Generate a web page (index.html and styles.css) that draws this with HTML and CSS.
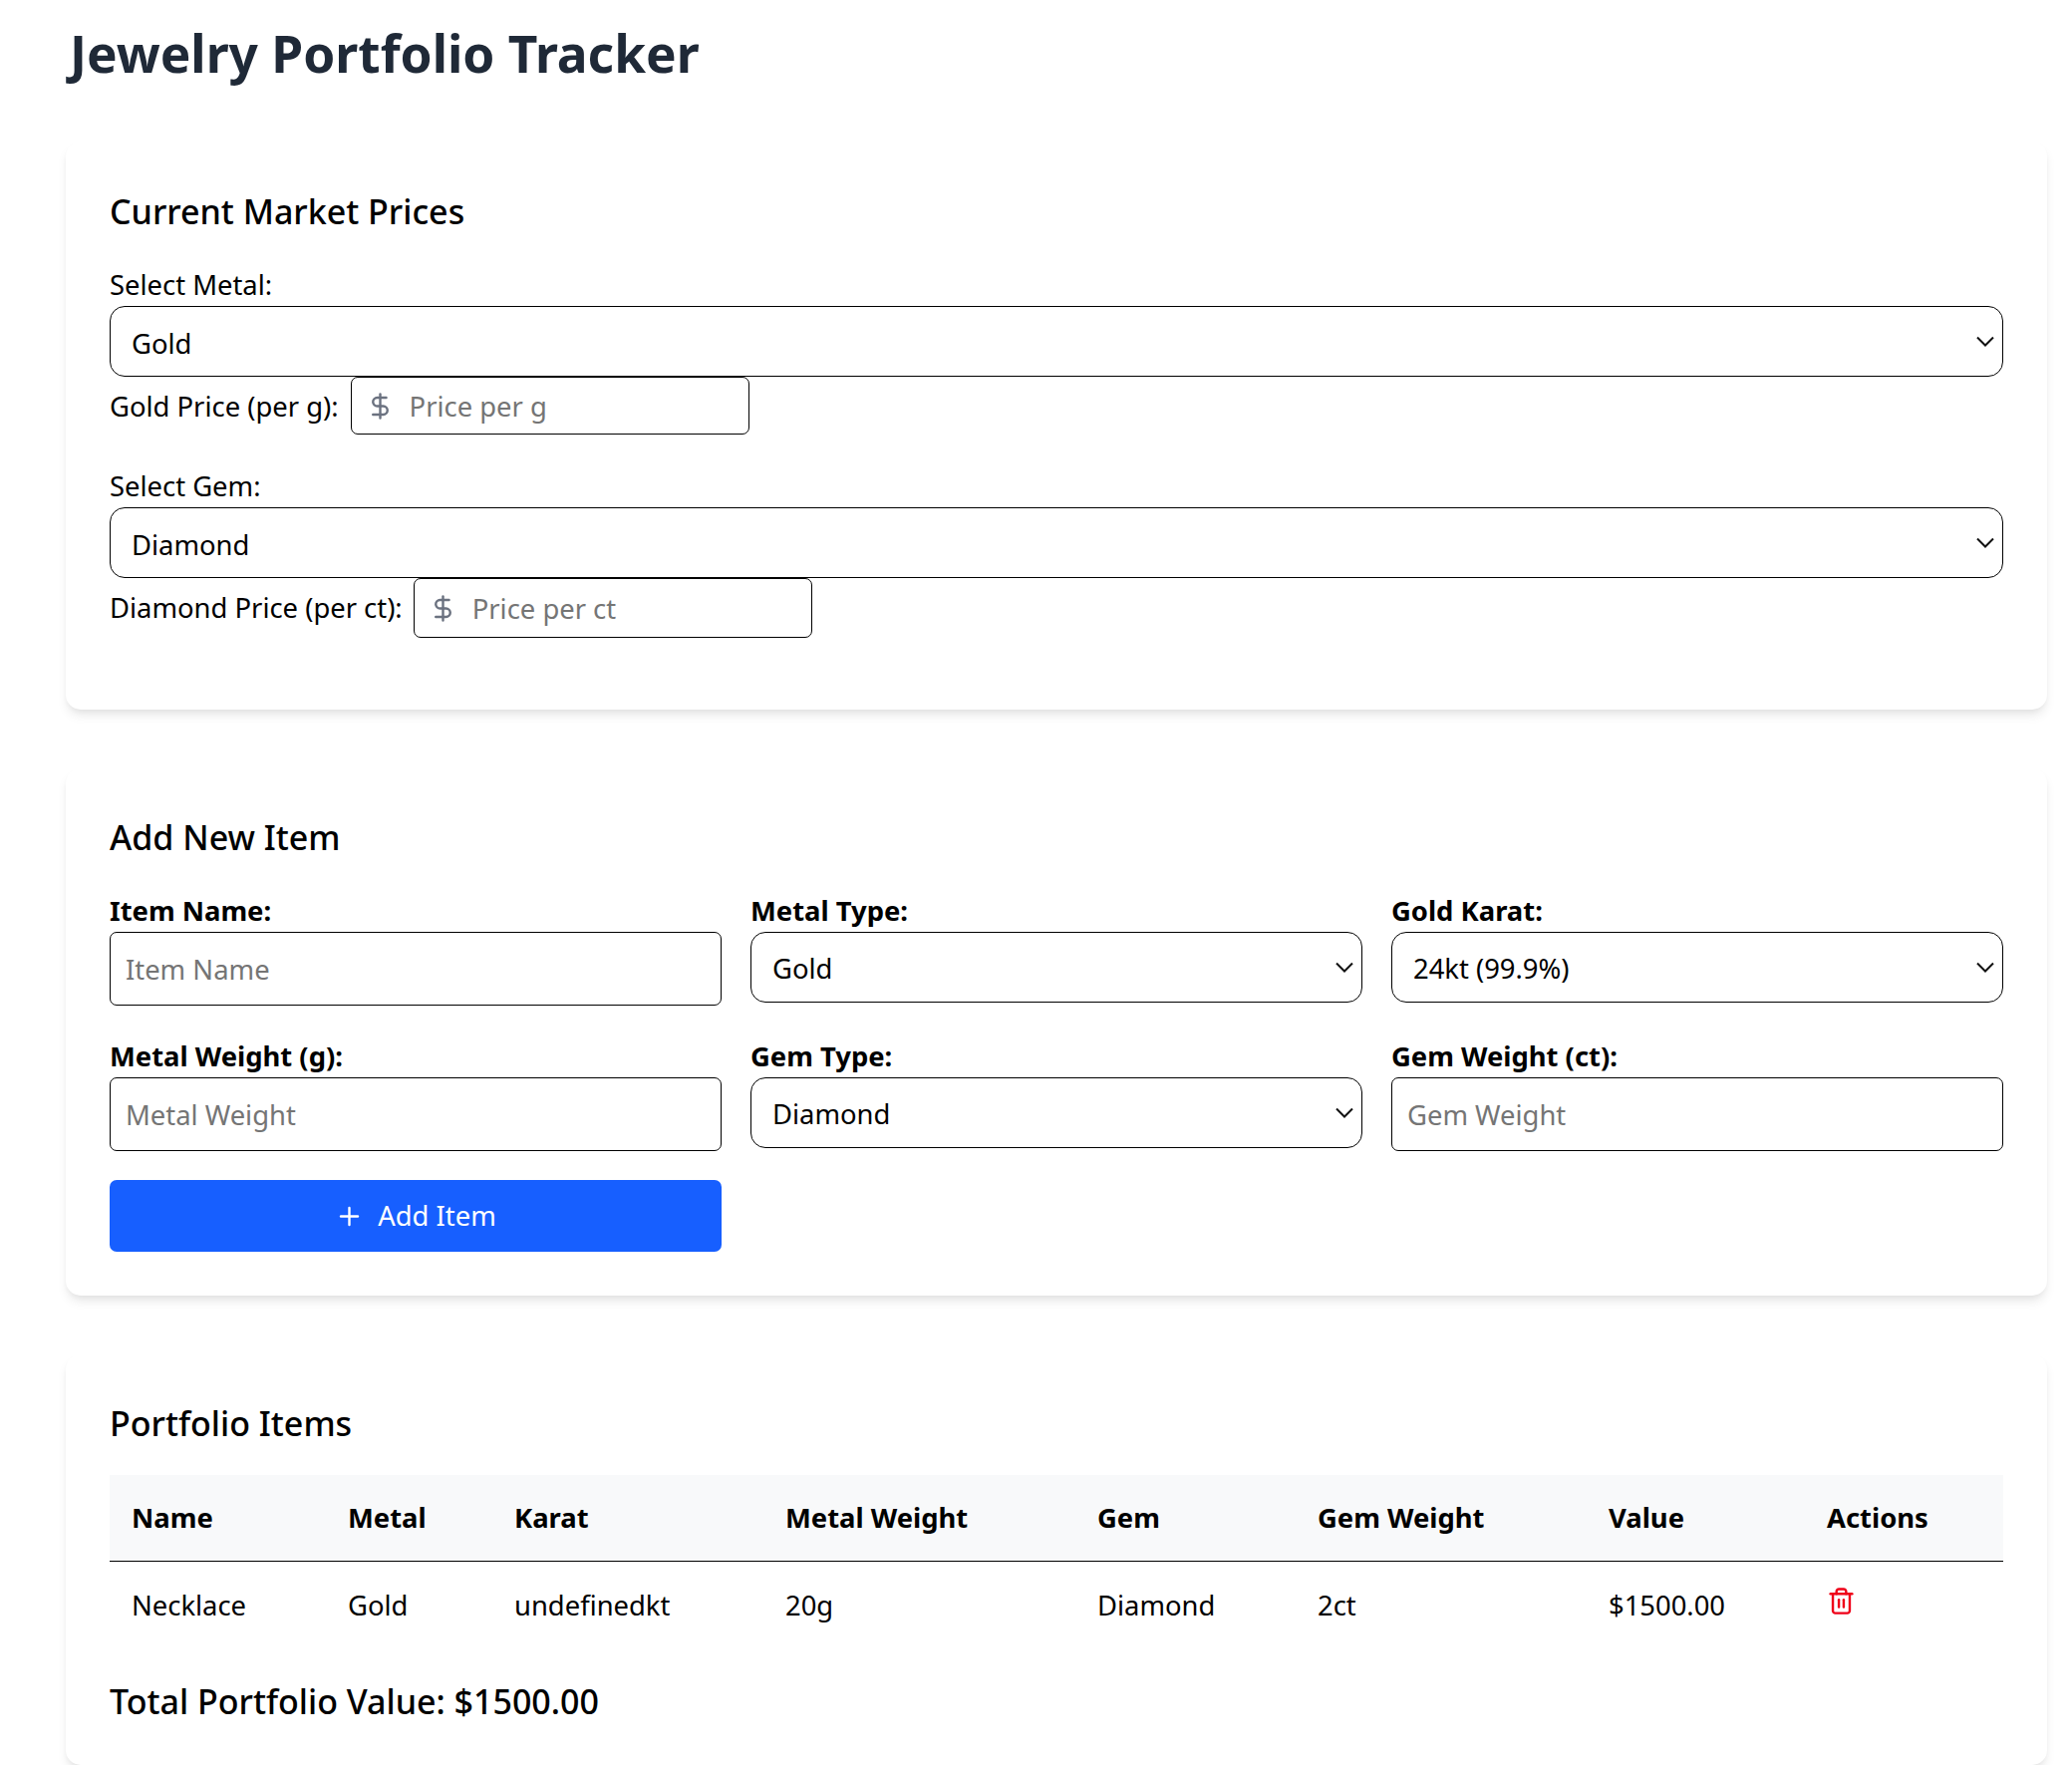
FILE: index.html
```html
<!DOCTYPE html>
<html lang="en">
<head>
  <meta charset="UTF-8">
  <meta name="viewport" content="width=device-width, initial-scale=1.0">
  <title>Jewelry Portfolio Tracker</title>
  <link rel="stylesheet" href="styles.css">
</head>
<body>
  <h1>Jewelry Portfolio Tracker</h1>

  <section class="card card-prices">
    <h2>Current Market Prices</h2>

    <div class="price-block">
      <label class="plain-label" for="metalSelect">Select Metal:</label>
      <select id="metalSelect" class="select">
        <option>Gold</option>
      </select>
      <div class="price-row">
        <label for="metalPrice">Gold Price (per g):</label>
        <div class="price-input">
          <svg class="dollar" viewBox="0 0 24 24"><line x1="12" y1="2" x2="12" y2="22"/><path d="M17 5H9.5a3.5 3.5 0 0 0 0 7h5a3.5 3.5 0 0 1 0 7H6"/></svg>
          <input type="text" id="metalPrice" placeholder="Price per g">
        </div>
      </div>
    </div>

    <div class="price-block">
      <label class="plain-label" for="gemSelect">Select Gem:</label>
      <select id="gemSelect" class="select">
        <option>Diamond</option>
      </select>
      <div class="price-row tall">
        <label for="gemPrice">Diamond Price (per ct):</label>
        <div class="price-input">
          <svg class="dollar" viewBox="0 0 24 24"><line x1="12" y1="2" x2="12" y2="22"/><path d="M17 5H9.5a3.5 3.5 0 0 0 0 7h5a3.5 3.5 0 0 1 0 7H6"/></svg>
          <input type="text" id="gemPrice" placeholder="Price per ct">
        </div>
      </div>
    </div>
  </section>

  <section class="card card-add">
    <h2>Add New Item</h2>
    <div class="form-grid">
      <div class="field">
        <label for="itemName">Item Name:</label>
        <input class="text-input" type="text" id="itemName" placeholder="Item Name">
      </div>
      <div class="field">
        <label for="metalType">Metal Type:</label>
        <select id="metalType" class="select"><option>Gold</option></select>
      </div>
      <div class="field">
        <label for="karat">Gold Karat:</label>
        <select id="karat" class="select"><option>24kt (99.9%)</option></select>
      </div>
      <div class="field">
        <label for="metalWeight">Metal Weight (g):</label>
        <input class="text-input" type="text" id="metalWeight" placeholder="Metal Weight">
      </div>
      <div class="field">
        <label for="gemType">Gem Type:</label>
        <select id="gemType" class="select"><option>Diamond</option></select>
      </div>
      <div class="field">
        <label for="gemWeight">Gem Weight (ct):</label>
        <input class="text-input" type="text" id="gemWeight" placeholder="Gem Weight">
      </div>
      <button class="add-button">
        <svg class="plus" viewBox="0 0 24 24"><path d="M5 12h14"/><path d="M12 5v14"/></svg>
        Add Item
      </button>
    </div>
  </section>

  <section class="card card-items">
    <h2>Portfolio Items</h2>
    <table>
      <colgroup>
        <col class="col-name">
        <col class="col-metal">
        <col class="col-karat">
        <col class="col-weight">
        <col class="col-gem">
        <col class="col-gem-weight">
        <col class="col-value">
        <col class="col-actions">
      </colgroup>
      <thead>
        <tr>
          <th>Name</th>
          <th>Metal</th>
          <th>Karat</th>
          <th>Metal Weight</th>
          <th>Gem</th>
          <th>Gem Weight</th>
          <th>Value</th>
          <th>Actions</th>
        </tr>
      </thead>
      <tbody>
        <tr>
          <td>Necklace</td>
          <td>Gold</td>
          <td>undefinedkt</td>
          <td>20g</td>
          <td>Diamond</td>
          <td>2ct</td>
          <td>$1500.00</td>
          <td>
            <button class="delete-button" aria-label="Delete">
              <svg class="trash" viewBox="0 0 24 24"><path d="M3 6h18"/><path d="M19 6v14c0 1-1 2-2 2H7c-1 0-2-1-2-2V6"/><path d="M8 6V4c0-1 1-2 2-2h4c1 0 2 1 2 2v2"/><line x1="10" y1="11" x2="10" y2="17"/><line x1="14" y1="11" x2="14" y2="17"/></svg>
            </button>
          </td>
        </tr>
      </tbody>
    </table>
    <h3>Total Portfolio Value: $1500.00</h3>
  </section>
</body>
</html>
```

FILE: styles.css
```css
* {
  box-sizing: border-box;
}

body {
  margin: 0;
  padding: 0 25px 0 66px;
  background-color: #fff;
  color: #000;
  font-family: "Noto Sans", "Open Sans", sans-serif;
  font-size: 27.4px;
  line-height: 44px;
}

h1 {
  margin: 0;
  padding: 21px 0 0 4px;
  height: 142px;
  color: #1f2937;
  font-size: 51.4px;
  font-weight: 700;
  line-height: 64px;
}

h2 {
  margin: 0 0 26px;
  font-size: 34px;
  font-weight: 500;
  line-height: 51px;
}

h3 {
  margin: 29px 0 0;
  font-size: 34px;
  font-weight: 500;
  line-height: 51px;
}

.card {
  padding: 44px;
  margin-bottom: 59px;
  background-color: #fff;
  border-radius: 15px;
  box-shadow: 0 7px 11px -2px rgba(0, 0, 0, 0.1), 0 3px 7px -3px rgba(0, 0, 0, 0.06);
}

.card-prices {
  height: 570px;
}

.card-prices h2 {
  padding-top: 1px;
  margin-bottom: 25px;
}

.card-add {
  height: 529px;
}

.card-items {
  height: 412px;
  margin-bottom: 0;
}

.plain-label {
  display: block;
  padding-top: 1px;
  line-height: 43px;
}

.select {
  display: block;
  width: 100%;
  height: 71px;
  padding: 4px 44px 0 21px;
  appearance: none;
  background-color: #fff;
  background-image: url("data:image/svg+xml,%3Csvg xmlns='http://www.w3.org/2000/svg' viewBox='0 0 18 11'%3E%3Cpath d='M1 1.5l8 8 8-8' fill='none' stroke='%23111' stroke-width='2'/%3E%3C/svg%3E");
  background-repeat: no-repeat;
  background-position: right 8px center;
  background-size: 18px 11px;
  border: 1px solid #000;
  border-radius: 15px;
  color: #000;
  font: inherit;
}

.form-grid .select {
  padding-top: 3px;
}

.price-block {
  margin-bottom: 29px;
}

.price-row {
  display: flex;
  align-items: flex-start;
  gap: 12px;
  line-height: 57px;
}

.price-row label {
  padding-top: 1px;
}

.price-row.tall {
  gap: 11px;
}

.price-input {
  position: relative;
  width: 400px;
  height: 58px;
}

.price-row.tall .price-input {
  height: 60px;
}

.price-input input {
  width: 100%;
  height: 100%;
  padding: 0 14px 0 58px;
  border: 1px solid #000;
  border-radius: 7px;
  font: inherit;
}

.dollar {
  position: absolute;
  left: 15px;
  top: 15px;
  width: 29px;
  height: 29px;
  fill: none;
  stroke: #6b7280;
  stroke-width: 2;
  stroke-linecap: round;
  stroke-linejoin: round;
}

.price-row.tall .dollar {
  top: 16px;
}

input::placeholder {
  color: #757575;
  opacity: 1;
}

.form-grid {
  display: grid;
  grid-template-columns: repeat(3, 1fr);
  gap: 28px 29px;
}

.card-add h2 {
  margin-bottom: 25px;
}

.field label {
  display: block;
  padding-top: 1px;
  font-weight: 700;
  line-height: 43px;
}

.text-input {
  display: block;
  width: 100%;
  height: 74px;
  padding: 0 15px;
  border: 1px solid #000;
  border-radius: 7px;
  font: inherit;
}

.add-button {
  display: flex;
  align-items: center;
  justify-content: center;
  gap: 14px;
  height: 72px;
  margin-top: 1px;
  background-color: #175fff;
  border: none;
  border-radius: 7px;
  color: #fff;
  cursor: pointer;
  font: inherit;
}

.plus {
  width: 29px;
  height: 29px;
  fill: none;
  stroke: #fff;
  stroke-width: 2;
  stroke-linecap: round;
}

table {
  width: 100%;
  border-collapse: collapse;
  table-layout: fixed;
}

.col-name { width: 217px; }
.col-metal { width: 167px; }
.col-karat { width: 272px; }
.col-weight { width: 313px; }
.col-gem { width: 221px; }
.col-gem-weight { width: 292px; }
.col-value { width: 219px; }
.col-actions { width: 199px; }

th, td {
  padding: 21px 22px;
  text-align: left;
  white-space: nowrap;
}

td {
  padding: 22px 22px 20px;
  vertical-align: top;
}

th {
  background-color: #f8f9fa;
  border-bottom: 1px solid #000;
  font-weight: 700;
}

.delete-button {
  display: block;
  padding: 0;
  background: none;
  border: none;
  cursor: pointer;
}

.trash {
  display: block;
  width: 29px;
  height: 29px;
  margin-top: 3px;
  fill: none;
  stroke: #ef0018;
  stroke-width: 2;
  stroke-linecap: round;
  stroke-linejoin: round;
}
```
